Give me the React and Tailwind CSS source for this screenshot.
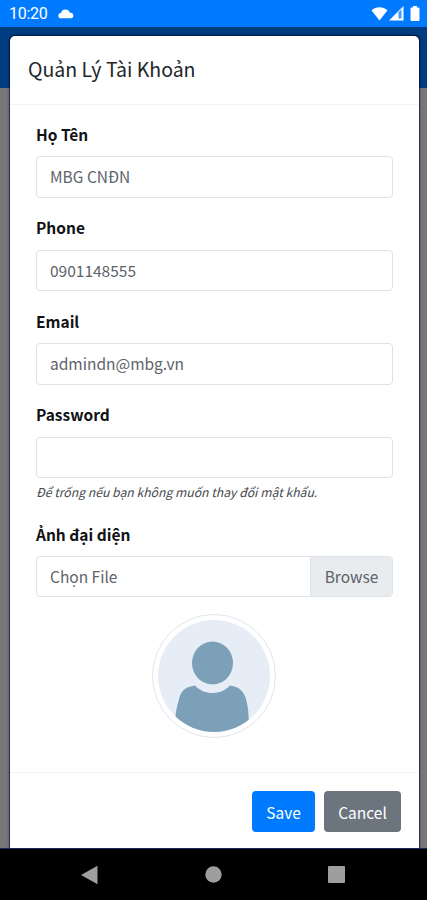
import clsx from "clsx";

const fields = [
  { label: "Họ Tên", value: "MBG CNĐN" },
  { label: "Phone", value: "0901148555" },
  { label: "Email", value: "admindn@mbg.vn" },
  { label: "Password", value: "", hint: "Để trống nếu bạn không muốn thay đổi mật khẩu." },
];

const StatusBar = () => {
  return (
    <div className="h-[27px] bg-[#007bff] flex items-center justify-between pl-[9px] pr-[7px] text-white shrink-0">
      <div className="flex items-center gap-[11px]">
        <span className="font-[Roboto,sans-serif] text-[16px] leading-[27px] tracking-[-0.3px]">10:20</span>
        <svg width="17" height="10" viewBox="0 0 17 10" fill="currentColor">
          <path d="M3.2 9.300a2.700 2.700 0 0 1-.2-5.400A4.600 4.600 0 0 1 11.800 3.800a2.800 2.800 0 0 1 1.400 5.500z" />
        </svg>
      </div>

      <div className="flex items-center">
        <svg width="17" height="15" viewBox="0 0 17 15" fill="currentColor">
          <path d="M8.500 14.500 0.500 4.200C5 .3 12 .3 16.500 4.200z" />
        </svg>
        <svg className="ml-px" width="15" height="15" viewBox="0 0 15 15">
          <path d="M0 14.500 14.500 0V14.500z" fill="#fff" />
          <path d="M9.500 6.300 12.500 3.300V12.500H9.500z" fill="#007bff" opacity=".75" />
        </svg>
        <svg className="ml-[6px]" width="10" height="15" viewBox="0 0 10 15" fill="currentColor">
          <path d="M3 0h4v1.500h1.500q1 0 1 1V14q0 1-1 1h-7q-1 0-1-1V2.500q0-1 1-1H3z" />
        </svg>
      </div>
    </div>
  );
};

const Label = ({ children }) => (
  <div className="h-[26px] mb-[9.4px] text-[15.5px] leading-[26px] font-bold text-[#101214] whitespace-nowrap">
    {children}
  </div>
);

const Avatar = () => (
  <div className="w-[124px] h-[124px] rounded-full border border-[#e1e6ea] bg-white p-[5px]">
    <svg width="112" height="112" viewBox="0 0 112 112">
      <defs>
        <clipPath id="avatar">
          <circle cx="56" cy="56" r="56" />
        </clipPath>
      </defs>
      <g clipPath="url(#avatar)">
        <rect width="112" height="112" fill="#e7edf6" />
        <ellipse cx="54.500" cy="43" rx="20.500" ry="21.500" fill="#7ca0b7" />
        <path
          d="M37 65.500C46 75.500 63 75.500 72 65.500C82 67 86 72 88 79C90 87 91 92 91 112H17C17 92 19 87 21 79C23 71 27 67 37 65.500z"
          fill="#7ca0b7"
        />
      </g>
    </svg>
  </div>
);

const NavBar = () => (
  <div className="h-[51px] bg-black shrink-0 flex items-center justify-between pl-[81px] pr-[82px] text-[#9e9e9e]">
    <svg width="17" height="20" viewBox="0 0 17 20" fill="currentColor">
      <path d="M0 10 16.500.800V19.200z" />
    </svg>
    <svg width="17" height="17" viewBox="0 0 17 17" fill="currentColor">
      <circle cx="8.500" cy="8.500" r="8.200" />
    </svg>
    <svg width="17" height="17" viewBox="0 0 17 17" fill="currentColor">
      <rect width="17" height="17" rx="1" />
    </svg>
  </div>
);

const App = () => {
  return (
    <div className="w-full h-[900px] flex flex-col overflow-hidden font-['Noto_Sans_CJK_SC','Noto_Sans',sans-serif]">
      <StatusBar />

      {/* Dimmed page with the modal on top */}
      <div className="h-[822px] shrink-0 pt-[9px] pl-[10px] pr-[8px] bg-[linear-gradient(#003d80_61px,#77787a_61px)] border-b border-[#16295c] overflow-hidden">
        <div className="h-[812px] bg-white rounded-t-[5px] shadow-[0_0_0_1px_rgba(0,0,50,0.5),0_0_3px_1px_rgba(0,0,30,0.35)] flex flex-col">
          <div className="h-[69px] shrink-0 border-b border-[#f1f3f4] pl-[18px] text-[19.5px] leading-[66px] text-[#212529] whitespace-nowrap">
            Quản Lý Tài Khoản
          </div>

          <div className="h-[667px] shrink-0 pt-[16px] px-[26px]">
            {fields.map((field) => (
              <div key={field.label} className={clsx(field.hint ? "mb-[14.5px]" : "mb-[16.5px]")}>
                <Label>{field.label}</Label>
                <div className="h-[41.5px] border border-[#dfe2e6] rounded-[4px] px-[13px] text-[15.5px] leading-[39px] text-[#5c636a] whitespace-nowrap">
                  {field.value}
                </div>
                {field.hint && (
                  <div className="h-[28px] text-[12.2px] leading-[28px] italic text-[#44484c] whitespace-nowrap">
                    {field.hint}
                  </div>
                )}
              </div>
            ))}

            <Label>Ảnh đại diện</Label>
            <div className="h-[41.5px] border border-[#dfe2e6] rounded-[4px] flex overflow-hidden text-[15.5px] leading-[39px] text-[#5c636a]">
              <div className="flex-1 pl-[13px]">Chọn File</div>
              <div className="w-[82px] border-l border-[#dfe2e6] bg-[#e9ecef] text-center">Browse</div>
            </div>

            <div className="flex justify-center mt-[17px] pr-px">
              <Avatar />
            </div>
          </div>

          <div className="flex-1 border-t border-[#f1f3f4] pt-[18px] pr-[18px] flex items-start justify-end gap-[9px] text-white text-[15.5px] leading-[40px] text-center">
            <button className="w-[63px] h-[41px] rounded-[4px] bg-[#007bff]">Save</button>
            <button className="w-[77px] h-[41px] rounded-[4px] bg-[#6c757d]">Cancel</button>
          </div>
        </div>
      </div>

      <NavBar />
    </div>
  );
};

export default App;
